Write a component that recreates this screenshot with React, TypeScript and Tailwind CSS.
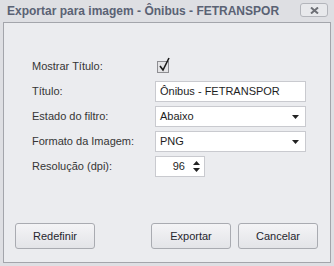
import React from 'react';

const font = "font-['Liberation_Sans',Arial,sans-serif]";

function Field({ label, children }: { label: string; children: React.ReactNode }) {
  return (
    <div className="flex h-[21px] items-center">
      <div className="w-[123px] shrink-0 text-[11px] text-[#353535]">{label}</div>
      {children}
    </div>
  );
}

function Arrow() {
  return (
    <svg width="7" height="4" viewBox="0 0 7 4" className="shrink-0">
      <path d="M0 0h7L3.5 4z" fill="#222" />
    </svg>
  );
}

function Select({ value }: { value: string }) {
  return (
    <div className="flex h-[21px] w-[151px] items-center border border-[#c9cacf] bg-white pl-[4px] pr-[6px]">
      <span className="flex-1 text-[11px] text-[#1e1e1e]">{value}</span>
      <Arrow />
    </div>
  );
}

function Button({ label, className = '' }: { label: string; className?: string }) {
  return (
    <button
      className={`h-[26px] w-[80px] rounded-[3px] border border-[#a9abb1] bg-gradient-to-b from-[#f4f4f6] to-[#e3e4e8] text-[11px] text-[#26262e] ${className}`}
    >
      {label}
    </button>
  );
}

export default function App() {
  return (
    <div className={`flex h-[266px] w-[334px] flex-col bg-[#dedfe3] ${font}`}>
      {/* title bar */}
      <div className="flex h-[22px] items-start pl-[7px] pr-[6px] pt-[3px]">
        <span className="flex-1 text-[12px] font-bold leading-[16px] text-[#5a6274]">
          Exportar para imagem - Ônibus - FETRANSPOR
        </span>
        <div className="flex h-[14px] w-[28px] items-center justify-center rounded-[3px] border border-[#b3b5bb] bg-[#e8e9ec]">
          <svg width="9" height="7" viewBox="0 0 9 7">
            <path d="M1 0.5L8 6.5M8 0.5L1 6.5" stroke="#6e7076" strokeWidth="2" />
          </svg>
        </div>
      </div>

      {/* body */}
      <div className="mx-[3px] mb-[3px] flex flex-1 flex-col border border-[#a3a5ab] bg-[#ebecef]">
        <div className="flex flex-col gap-[4px] pl-[28px] pt-[33px]">
          <Field label="Mostrar Título:">
            <div className="relative ml-[2px] h-[12px] w-[12px] border border-[#8e8e92] bg-[#e4e4e6]">
              <svg width="13" height="15" viewBox="0 0 13 15" className="absolute left-[0px] top-[-5px]">
                <path d="M2 9L5 13L11 1" stroke="#1c1c1c" strokeWidth="1.6" fill="none" />
              </svg>
            </div>
          </Field>
          <Field label="Título:">
            <div className="flex h-[21px] w-[151px] items-center border border-[#c9cacf] bg-white pl-[4px] text-[11px] text-[#1e1e1e]">
              Ônibus - FETRANSPOR
            </div>
          </Field>
          <Field label="Estado do filtro:">
            <Select value="Abaixo" />
          </Field>
          <Field label="Formato da Imagem:">
            <Select value="PNG" />
          </Field>
          <Field label="Resolução (dpi):">
            <div className="flex h-[21px] w-[50px] items-center border border-[#c9cacf] bg-white pr-[4px]">
              <span className="flex-1 pr-[8px] text-right text-[11px] text-[#1e1e1e]">96</span>
              <div className="flex flex-col gap-[3px]">
                <svg width="7" height="4" viewBox="0 0 7 4">
                  <path d="M0 4h7L3.5 0z" fill="#222" />
                </svg>
                <svg width="7" height="4" viewBox="0 0 7 4">
                  <path d="M0 0h7L3.5 4z" fill="#222" />
                </svg>
              </div>
            </div>
          </Field>
        </div>

        <div className="flex-1" />

        <div className="flex items-center pb-[13px] pl-[11px] pr-[12px]">
          <Button label="Redefinir" />
          <div className="flex-1" />
          <Button label="Exportar" className="mr-[7px]" />
          <Button label="Cancelar" />
        </div>
      </div>
    </div>
  );
}
